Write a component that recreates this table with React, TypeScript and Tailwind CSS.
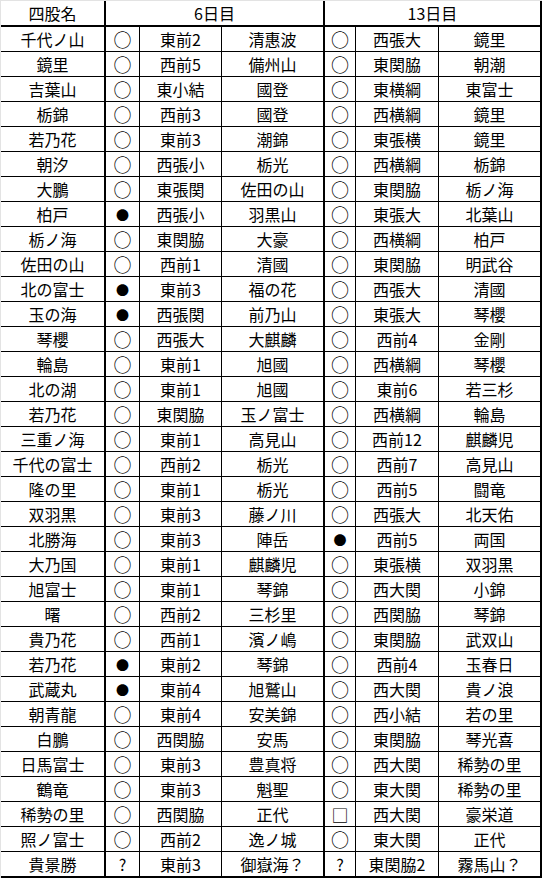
const rows: string[][] = [
  ['千代ノ山', '○', '東前2', '清惠波', '○', '西張大', '鏡里'],
  ['鏡里', '○', '西前5', '備州山', '○', '東関脇', '朝潮'],
  ['吉葉山', '○', '東小結', '國登', '○', '東横綱', '東富士'],
  ['栃錦', '○', '西前3', '國登', '○', '西横綱', '鏡里'],
  ['若乃花', '○', '東前3', '潮錦', '○', '東張横', '鏡里'],
  ['朝汐', '○', '西張小', '栃光', '○', '西横綱', '栃錦'],
  ['大鵬', '○', '東張関', '佐田の山', '○', '東関脇', '栃ノ海'],
  ['柏戸', '●', '西張小', '羽黒山', '○', '東張大', '北葉山'],
  ['栃ノ海', '○', '東関脇', '大豪', '○', '西横綱', '柏戸'],
  ['佐田の山', '○', '西前1', '清國', '○', '東関脇', '明武谷'],
  ['北の富士', '●', '東前3', '福の花', '○', '西張大', '清國'],
  ['玉の海', '●', '西張関', '前乃山', '○', '東張大', '琴櫻'],
  ['琴櫻', '○', '西張大', '大麒麟', '○', '西前4', '金剛'],
  ['輪島', '○', '東前1', '旭國', '○', '西横綱', '琴櫻'],
  ['北の湖', '○', '東前1', '旭國', '○', '東前6', '若三杉'],
  ['若乃花', '○', '東関脇', '玉ノ富士', '○', '西横綱', '輪島'],
  ['三重ノ海', '○', '東前1', '高見山', '○', '西前12', '麒麟児'],
  ['千代の富士', '○', '西前2', '栃光', '○', '西前7', '高見山'],
  ['隆の里', '○', '東前1', '栃光', '○', '西前5', '闘竜'],
  ['双羽黒', '○', '東前3', '藤ノ川', '○', '西張大', '北天佑'],
  ['北勝海', '○', '東前3', '陣岳', '●', '西前5', '両国'],
  ['大乃国', '○', '東前1', '麒麟児', '○', '東張横', '双羽黒'],
  ['旭富士', '○', '東前1', '琴錦', '○', '西大関', '小錦'],
  ['曙', '○', '西前2', '三杉里', '○', '西関脇', '琴錦'],
  ['貴乃花', '○', '西前1', '濱ノ嶋', '○', '東関脇', '武双山'],
  ['若乃花', '●', '東前2', '琴錦', '○', '西前4', '玉春日'],
  ['武蔵丸', '●', '東前4', '旭鷲山', '○', '西大関', '貴ノ浪'],
  ['朝青龍', '○', '東前4', '安美錦', '○', '西小結', '若の里'],
  ['白鵬', '○', '西関脇', '安馬', '○', '東関脇', '琴光喜'],
  ['日馬富士', '○', '東前3', '豊真将', '○', '西大関', '稀勢の里'],
  ['鶴竜', '○', '東前3', '魁聖', '○', '東大関', '稀勢の里'],
  ['稀勢の里', '○', '西関脇', '正代', '□', '西大関', '豪栄道'],
  ['照ノ富士', '○', '西前2', '逸ノ城', '○', '東大関', '正代'],
  ['貴景勝', '?', '東前3', '御嶽海？', '?', '東関脇2', '霧馬山？'],
];

// right border per column: thick after name, after day 6 block and at the end
const colBorder = [
  'border-r-2',
  'border-r',
  'border-r',
  'border-r-2',
  'border-r',
  'border-r',
  'border-r-2',
];

function Mark({ value }: { value: string }) {
  if (value === '●') return <span className="text-[13px] leading-none text-black">●</span>;
  if (value === '○') return <span className="text-[18px] leading-none text-black">○</span>;
  if (value === '□') return <span className="text-[17px] leading-none text-black">□</span>;
  return <span>{value}</span>;
}

export default function App() {
  return (
    <div
      className="w-[542px] h-[878px] bg-white text-black text-[16px] border-t border-l border-[#e3e3e3] overflow-hidden"
      style={{ fontFamily: '"Noto Sans CJK JP", "Noto Sans", sans-serif' }}
    >
      <div className="grid grid-cols-[105px_34px_82px_103px_31px_83px_103px]">
        <div className="h-[26px] flex items-center justify-center border-r-2 border-b-2 border-black">四股名</div>
        <div className="col-span-3 h-[26px] flex items-center justify-center border-r-2 border-b-2 border-black">6日目</div>
        <div className="col-span-3 h-[26px] flex items-center justify-center border-r-2 border-b-2 border-black">13日目</div>

        {rows.map((row, i) => {
          const last = i === rows.length - 1;
          return row.map((cell, j) => (
            <div
              key={`${i}-${j}`}
              className={`flex items-center justify-center whitespace-nowrap border-black ${colBorder[j]} ${
                last ? 'h-[26px] border-b-2' : 'h-[25px] border-b'
              }`}
            >
              {j === 1 || j === 4 ? <Mark value={cell} /> : cell}
            </div>
          ));
        })}
      </div>
    </div>
  );
}
